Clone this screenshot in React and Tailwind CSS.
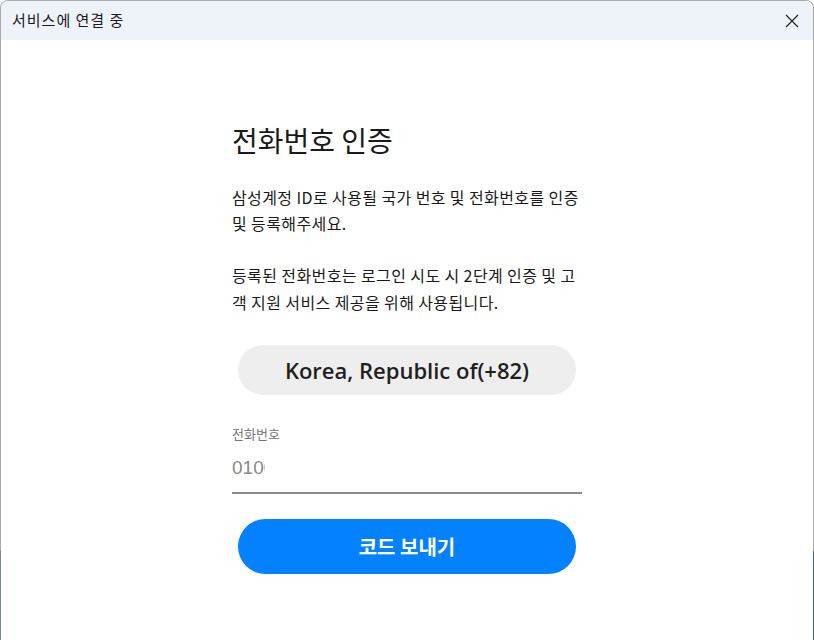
import React from "react";

export default function App() {
  return (
    <div className="relative w-[814px] h-[640px] overflow-hidden bg-white" style={{ fontFamily: '"Noto Sans CJK KR", "Noto Sans", sans-serif' }}>
      <div className="w-full h-full rounded-t-[8px] border border-b-0 border-[#a9a9a9] flex flex-col overflow-hidden">
        <div className="h-[39px] shrink-0 bg-[#eef3fa] flex items-center justify-between pl-[11px] pr-[12px]">
          <span className="text-[15px] tracking-[1px] text-[#1a1a1a]">서비스에 연결 중</span>
          <svg width="14" height="14" viewBox="0 0 14 14" className="mr-[2px]">
            <path d="M1 1L13 13M13 1L1 13" stroke="#222" strokeWidth="1.2" />
          </svg>
        </div>
        <div className="flex-1 bg-white flex justify-center">
          <div className="w-[350px] flex flex-col">
            <h1 className="mt-[80px] text-[28px] leading-[40px] text-[#1a1a1a] font-normal">전화번호 인증</h1>
            <p className="mt-[24px] text-[16px] leading-[26px] text-[#1a1a1a] whitespace-nowrap tracking-[0.4px]">
              삼성계정 ID로 사용될 국가 번호 및 전화번호를 인증<br />
              및 등록해주세요.
            </p>
            <p className="mt-[26px] text-[16px] leading-[27px] text-[#1a1a1a] whitespace-nowrap tracking-[0.4px]">
              등록된 전화번호는 로그인 시도 시 2단계 인증 및 고<br />
              객 지원 서비스 제공을 위해 사용됩니다.
            </p>
            <div className="mt-[29px] mx-[6px] h-[50px] rounded-full bg-[#eeeeee] flex items-center justify-center">
              <span className="text-[22px] font-semibold text-[#1f1f1f]" style={{ fontFamily: '"Open Sans", "Noto Sans", sans-serif' }}>Korea, Republic of(+82)</span>
            </div>
            <div className="mt-[30px] text-[13px] leading-[18px] text-[#777777]">전화번호</div>
            <div className="mt-[11px] h-[27px] w-[33px] overflow-hidden whitespace-nowrap text-[19px] leading-[27px] text-[#8a8a8a]" style={{ fontFamily: '"Liberation Sans", Arial, sans-serif' }}>0100000</div>
            <div className="mt-[11px] h-[2px] bg-[#8c8c8c]" />
            <button className="mt-[25px] mx-[6px] h-[55px] rounded-full bg-[#0381fe] text-white text-[20px] font-bold flex items-center justify-center">코드 보내기</button>
          </div>
        </div>
      </div>
      <div className="absolute left-0 top-[551px] w-[1px] h-[89px] bg-[#73879a]" />
      <div className="absolute right-0 top-[551px] w-[1px] h-[89px] bg-[#3a66a8]" />
    </div>
  );
}
